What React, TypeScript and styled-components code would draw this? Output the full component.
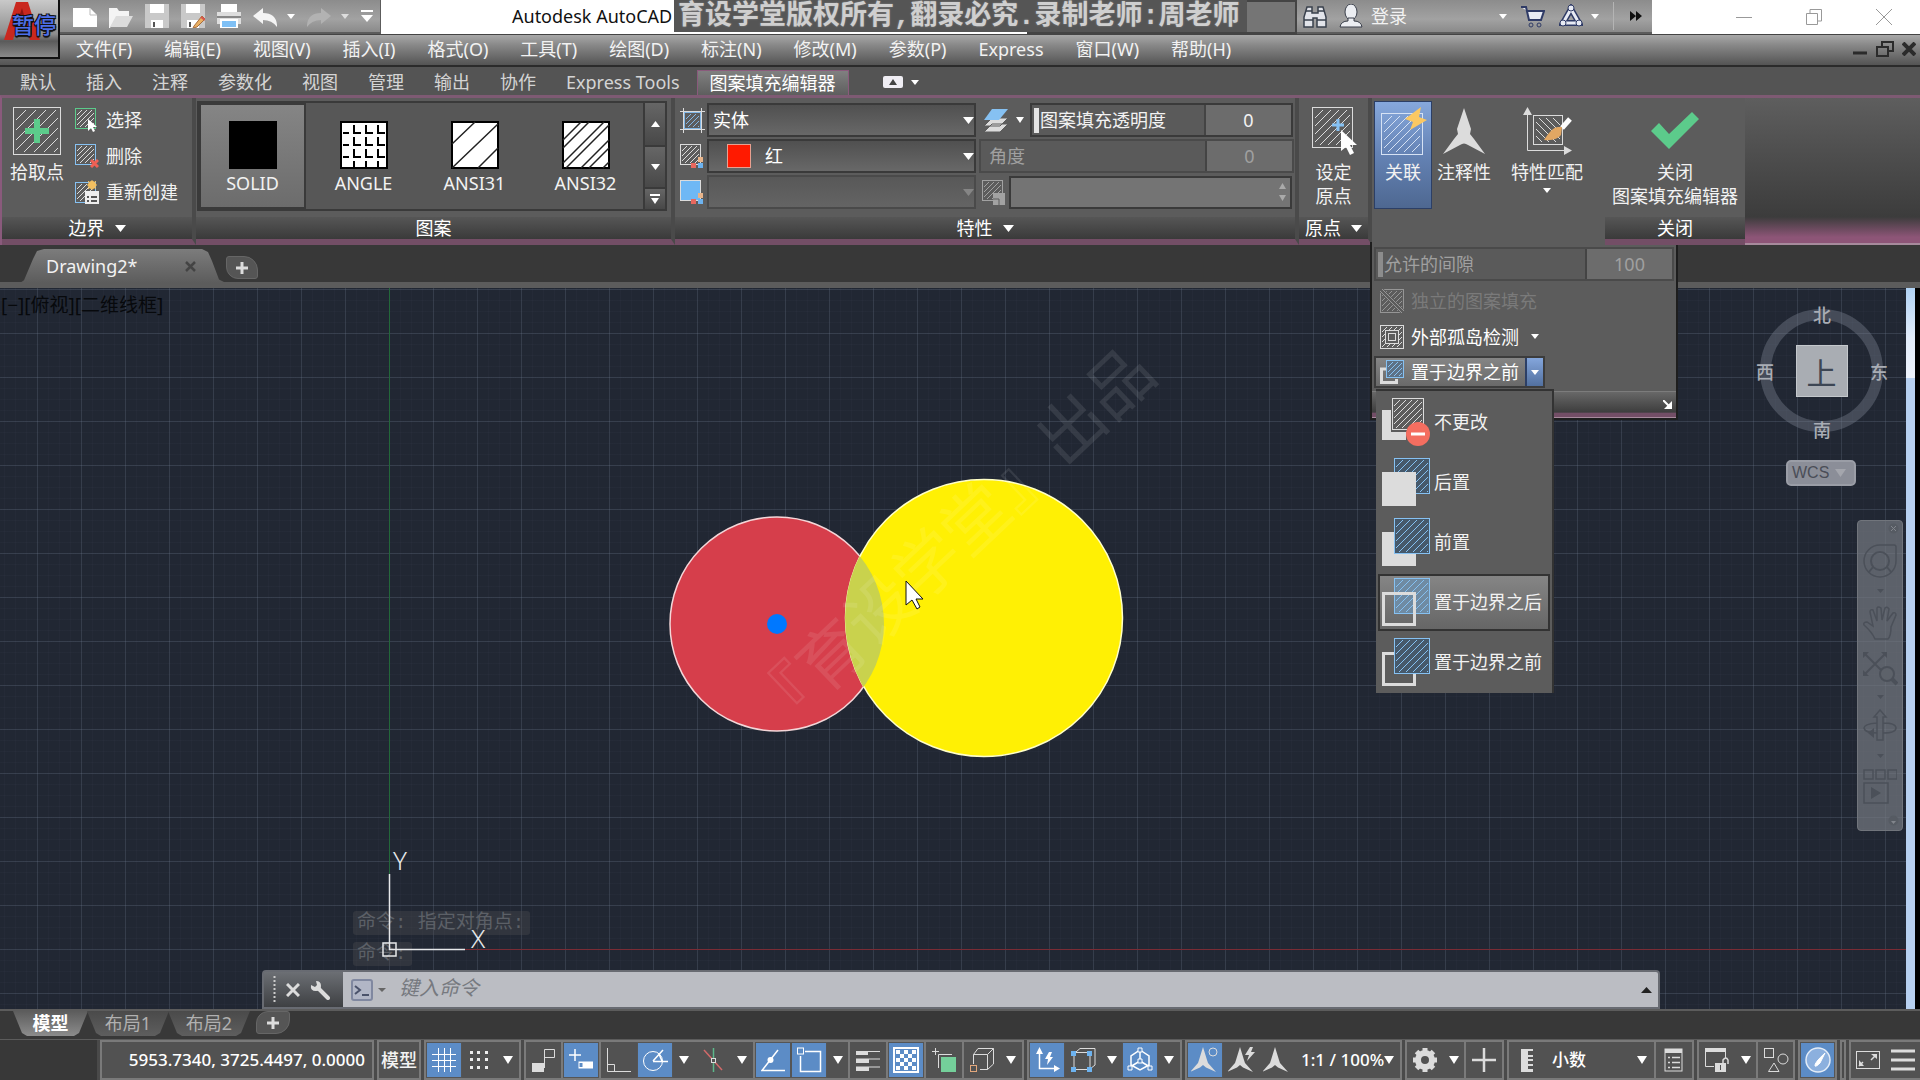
import React from 'react';
import styled, { createGlobalStyle, css } from 'styled-components';

const GlobalStyle = createGlobalStyle`
  *, *::before, *::after { box-sizing: border-box; }
  body { margin: 0; background: #383838; }
  body, button, input, select {
    font-family: "Noto Sans", "Noto Sans CJK SC", sans-serif;
    font-size: 18px;
    line-height: 24px;
    color: #f2f2f2;
  }
  button { background: none; border: 0; padding: 0; margin: 0; white-space: nowrap; }
  svg { display: block; flex: none; }
`;

const LIGHT = '#dcdcdc';
const BLUE = '#86c1f2';
const GREEN = '#5ccb8b';

/* ---------- icon drawing helpers ---------- */

const hatchPath = (x: number, y: number, w: number, h: number, step: number, back = false) => {
  let d = '';
  for (let c = step; c < w + h; c += step) {
    const x1 = Math.max(0, c - h);
    const y1 = Math.min(c, h);
    const x2 = Math.min(c, w);
    const y2 = Math.max(0, c - w);
    d += back
      ? `M${x + w - x1} ${y + y1}L${x + w - x2} ${y + y2}`
      : `M${x + x1} ${y + y1}L${x + x2} ${y + y2}`;
  }
  return d;
};

type HatchProps = {
  x: number; y: number; w: number; h: number;
  step?: number; color?: string; fill?: string; back?: boolean; pad?: number;
};

const Hatch = ({ x, y, w, h, step = 6, color = LIGHT, fill = 'none', back, pad = 2 }: HatchProps) => (
  <g stroke={color} fill="none">
    <rect x={x + 0.5} y={y + 0.5} width={w - 1} height={h - 1} fill={fill} />
    <path d={hatchPath(x + pad, y + pad, w - 2 * pad, h - 2 * pad, step, back)} />
  </g>
);

const Tri = ({ w = 10, h = 7, color = '#fff', up = false }: { w?: number; h?: number; color?: string; up?: boolean }) => (
  <svg width={w} height={h} viewBox="0 0 10 7" preserveAspectRatio="none">
    <path d={up ? 'M0 7H10L5 0Z' : 'M0 0H10L5 7Z'} fill={color} />
  </svg>
);

const Icon = ({ w = 24, h = w, children }: { w?: number; h?: number; children: React.ReactNode }) => (
  <svg width={w} height={h} viewBox={`0 0 ${w} ${h}`} fill="none" stroke={LIGHT}>{children}</svg>
);

/* ---------- title bar ---------- */

const Shell = styled.div`
  display: flex;
  flex-direction: column;
  min-height: 100vh;
  background: #383838;
  overflow: hidden;
`;

const Header = styled.header`
  position: relative;
`;

const TitleBar = styled.div`
  display: flex;
  height: 34px;
  padding-left: 59px;
  background: #fff;
`;

const QuickTools = styled.div`
  display: flex;
  align-items: center;
  gap: 12px;
  width: 322px;
  padding-left: 14px;
  background: linear-gradient(#8c8c8c, #a2a2a2 60%, #8a8a8a);
  border-bottom: 2px solid #5c5c5c;
  border-right: 1px solid #5c5c5c;
`;

const ToolButton = styled.button`
  display: flex;
  align-items: center;
  gap: 10px;
`;

const WindowTitle = styled.h1`
  flex: 1;
  margin: 0;
  padding-left: 131px;
  font-size: 18px;
  font-weight: 400;
  line-height: 33px;
  color: #111;
`;

const SearchBox = styled.input`
  width: 270px;
  background: #757575;
  border: 2px solid #444;
`;

const AccountTools = styled.div`
  display: flex;
  align-items: center;
  width: 355px;
  padding: 0 10px 0 6px;
  background: linear-gradient(#8c8c8c, #a2a2a2 60%, #8a8a8a);
  border-bottom: 2px solid #5c5c5c;
`;

const SignIn = styled.button`
  display: flex;
  align-items: center;
  gap: 8px;
  width: 173px;
  margin-left: 12px;
  svg:last-child { margin-left: auto; }
`;

const AccountButton = styled.button`
  display: flex;
  align-items: center;
  gap: 8px;
  margin-left: 14px;
`;

const Divider = styled.span`
  width: 1px;
  height: 28px;
  margin: 0 16px 0 14px;
  background: #b4b4b4;
`;

const WindowButtons = styled.div`
  display: flex;
  width: 268px;
  padding-left: 57px;
  button { width: 70px; display: grid; place-items: center; }
`;

const Notice = styled.div`
  position: absolute;
  top: 0;
  left: 674px;
  height: 32px;
  padding: 0 7px 0 4px;
  background: #555;
  font-family: "Liberation Mono", "Noto Sans CJK SC", monospace;
  font-size: 27px;
  font-weight: 700;
  line-height: 34px;
  color: #cfcfcf;
  text-shadow: 0 0 2px #888;
  white-space: nowrap;
`;

const AppButton = styled.button`
  position: absolute;
  top: 0;
  left: 0;
  width: 60px;
  height: 59px;
  background: linear-gradient(#c9c9c9, #8d8d8d 60%, #5a5a5a 72%, #8a8a8a);
  border: solid #111;
  border-width: 0 2px 2px 0;
  svg { position: absolute; top: 0; left: 4px; }
  span {
    position: absolute;
    top: 12px;
    left: 12px;
    font-size: 22px;
    font-weight: 500;
    color: #4d6fe8;
    text-shadow: 1px 1px 0 #111, -1px 1px 0 #111, 1px -1px 0 #111, -1px -1px 0 #111, 0 2px 1px #111;
  }
`;

/* ---------- menus and tabs ---------- */

const MenuBar = styled.nav`
  display: flex;
  align-items: center;
  gap: 32px;
  height: 33px;
  padding: 0 4px 2px 76px;
  background: linear-gradient(#a8a8a8, #878787 35%, #545454);
  border-top: 1px solid #444;
  border-bottom: 2px solid #2b2b2b;
`;

const DocButtons = styled.div`
  display: flex;
  align-items: center;
  gap: 8px;
  margin-left: auto;
`;

const TabStrip = styled.div`
  display: flex;
  align-items: flex-end;
  height: 28px;
  padding-left: 5px;
  background: #545454;
`;

const RibbonTab = styled.button<{ $active?: boolean }>`
  height: 25px;
  padding: 0 15px 1px;
  color: #d4d4d4;
  ${p => p.$active && css`
    margin: 0 2px;
    padding: 0 12px 1px;
    color: #fff;
    background: linear-gradient(#808080, #5e5e5e);
    border: 1px solid #8a5a7c;
    border-bottom: 0;
  `}
`;

const TabExtra = styled.button`
  display: flex;
  align-items: center;
  gap: 8px;
  height: 26px;
  margin-left: 32px;
`;

/* ---------- ribbon ---------- */

const Ribbon = styled.section`
  position: relative;
  z-index: 2;
  display: flex;
  height: 150px;
  border-top: 3px solid #7e5a73;
  border-left: 2px solid #8a5a7c;
  background: #5c5c5c;
`;

const Panel = styled.div<{ $w: number; $open?: boolean; $last?: boolean }>`
  position: relative;
  display: flex;
  flex-direction: column;
  width: ${p => p.$w}px;
  border-right: ${p => (p.$last ? 0 : 4)}px solid ${p => (p.$open ? '#5c5c5c' : '#4a4a4a')};
  background: #5c5c5c;
  border-bottom: ${p => (p.$open ? 0 : 6)}px solid #734e66;
`;

const PanelBody = styled.div<{ $pad?: string; $gap?: number }>`
  display: flex;
  align-items: flex-start;
  flex: 1;
  gap: ${p => p.$gap ?? 0}px;
  padding: ${p => p.$pad ?? '0'};
`;

const PanelTitle = styled.button`
  display: flex;
  align-items: center;
  justify-content: center;
  gap: 10px;
  height: 22px;
  background: linear-gradient(#565656, #3a3a3a);
  color: #fff;
`;

const RibbonRest = styled.div`
  flex: 1;
  background: linear-gradient(#5e5e5e, #3c3c3c 82%, #8d5577 96%);
  border-bottom: 2px solid #a78a9c;
`;

const BigButton = styled.button<{ $w: number; $active?: boolean }>`
  display: flex;
  flex-direction: column;
  align-items: center;
  width: ${p => p.$w}px;
  height: 106px;
  padding-top: 5px;
  ${p => p.$active && css`
    background: linear-gradient(#86a8dc, #6482b4 50%, #4e6891);
    outline: 1px solid #2c3f66;
  `}
  svg { margin-bottom: 5px; }
  svg + span ~ svg { margin: 4px 0 0; }
`;

const Stack = styled.div`
  display: flex;
  flex-direction: column;
`;

const SmallButton = styled.button`
  display: flex;
  align-items: center;
  gap: 7px;
  height: 36px;
`;

const Gallery = styled.div`
  display: flex;
  height: 110px;
  border: 2px solid #3a3a3a;
  background: #575757;
`;

const Swatch = styled.button<{ $active?: boolean }>`
  display: flex;
  flex-direction: column;
  align-items: center;
  gap: 2px;
  width: 107px;
  height: 106px;
  margin-right: 4px;
  padding-top: 16px;
  border: 2px solid ${p => (p.$active ? '#3a3a3a' : 'transparent')};
  background: ${p => (p.$active ? 'linear-gradient(#858585, #6c6c6c)' : 'none')};
`;

const GalleryScroll = styled.div`
  display: grid;
  grid-template-rows: 42px 42px 1fr;
  width: 22px;
  border-left: 2px solid #3a3a3a;
  button { display: grid; place-content: center; gap: 2px; background: linear-gradient(#666, #484848); }
  button + button { border-top: 2px solid #3a3a3a; }
`;

const Props = styled.div`
  display: grid;
  grid-template-columns: 25px 269px 1fr;
  grid-auto-rows: 34px;
  row-gap: 2px;
  column-gap: 3px;
  align-items: center;
  width: 100%;
`;

const Picker = styled.div`
  position: relative;
  display: flex;
  align-items: center;
  height: 34px;
  > svg { position: absolute; right: 2px; pointer-events: none; }
`;

const Select = styled.select<{ $indent?: number }>`
  width: 100%;
  height: 34px;
  padding: 0 20px 0 ${p => p.$indent ?? 4}px;
  appearance: none;
  color: #fff;
  border: 2px solid #3a3a3a;
  border-radius: 0;
  background: linear-gradient(#505050, #686868);
  opacity: 1;
  &:disabled { border-color: #4a4a4a; background: linear-gradient(#585858, #646464); }
`;

const ColorChip = styled.span`
  position: absolute;
  left: 20px;
  width: 24px;
  height: 24px;
  background: #ff1a00;
  border: 1px solid #e8a090;
`;

const PropRight = styled.div`
  display: flex;
  align-items: center;
`;

const SliderField = styled.div<{ $w: number; $off?: boolean }>`
  display: grid;
  flex: none;
  grid-template-columns: 1fr 87px;
  width: ${p => p.$w}px;
  height: 34px;
  border: 2px solid ${p => (p.$off ? '#4a4a4a' : '#3a3a3a')};
  background: #5a5a5a;
  color: ${p => (p.$off ? '#a0a0a0' : '#f2f2f2')};
  label, input[type='range'] { grid-area: 1 / 1; }
  label { z-index: 1; padding-left: 8px; line-height: 30px; pointer-events: none; }
`;

const Range = styled.input<{ $thumb: string }>`
  appearance: none;
  width: 100%;
  height: 30px;
  margin: 0;
  background: none;
  &::-webkit-slider-thumb {
    appearance: none;
    width: 5px;
    height: 25px;
    margin-left: 2px;
    background: ${p => p.$thumb};
  }
`;

const ValueInput = styled.input`
  width: 100%;
  min-width: 0;
  height: 30px;
  border: 0;
  border-left: 2px solid #444;
  border-radius: 0;
  padding: 0;
  background: #6c6c6c;
  text-align: center;
  color: inherit;
`;

const LayerButton = styled.button`
  display: flex;
  align-items: center;
  gap: 8px;
  width: 46px;
  margin-left: 5px;
`;

const SpinField = styled.div`
  display: flex;
  flex: 1;
  height: 33px;
  margin-right: 3px;
  border: 2px solid #3a3a3a;
  background: #747474;
  input { flex: 1; min-width: 0; border: 0; background: none; }
`;

const Spin = styled.span`
  display: flex;
  flex-direction: column;
  justify-content: space-around;
  padding: 2px 4px;
`;

/* ---------- expanded option panel ---------- */

const Expanded = styled.div`
  position: absolute;
  top: 144px;
  left: -2px;
  width: 308px;
  padding: 5px 2px 0;
  display: flex;
  flex-direction: column;
  align-items: flex-start;
  gap: 3px;
  background: #5c5c5c;
  border: solid #1e1e1e;
  border-width: 0 2px 2px;
`;

const OptionButton = styled.button<{ $off?: boolean }>`
  display: flex;
  align-items: center;
  height: 33px;
  padding-left: 6px;
  gap: 7px;
  color: ${p => (p.$off ? '#7a7a7a' : '#fff')};
  svg:nth-of-type(2) { margin-left: 5px; }
`;

const Split = styled.div`
  display: flex;
  height: 32px;
  border: 2px solid #3c3c3c;
  ${OptionButton} { height: 28px; width: 149px; padding-left: 4px; background: linear-gradient(#858585, #696969); }
`;

const SplitArrow = styled.button`
  display: grid;
  place-items: center;
  width: 18px;
  border-left: 2px solid #2c3f66;
  background: linear-gradient(#84a6dc, #52709f);
`;

const ExpandedFoot = styled.div`
  display: flex;
  align-items: center;
  align-self: stretch;
  justify-content: flex-end;
  height: 27px;
  margin: 0 -2px;
  padding-right: 4px;
  background: linear-gradient(#686868, #3e3e3e 80%, #734e66 86%);
  border-top: 1px solid #7c7c7c;
  border-bottom: 1px solid #a78a9c;
`;

const Popup = styled.div`
  position: absolute;
  top: 147px;
  left: 4px;
  width: 178px;
  display: flex;
  flex-direction: column;
  gap: 3px;
  padding: 3px 2px 2px 2px;
  background: #5c5c5c;
  border: solid #333;
  border-width: 2px 2px 0 0;
`;

const PopupItem = styled.button<{ $active?: boolean }>`
  display: flex;
  align-items: center;
  gap: 4px;
  height: 57px;
  padding: 0 0 2px 2px;
  border: 2px solid transparent;
  ${p => p.$active && css`
    border-color: #333;
    background: linear-gradient(#858585, #666);
  `}
`;

/* ---------- document area ---------- */

const FileTabs = styled.div`
  display: flex;
  align-items: flex-end;
  height: 43px;
  padding: 0 0 5px 20px;
  background: linear-gradient(#383838 37px, #5c5c5c 37px);
`;

const FileTab = styled.div`
  display: flex;
  align-items: center;
  justify-content: space-between;
  width: 206px;
  height: 34px;
  padding: 0 30px 0 26px;
  background: linear-gradient(#7c7c7c, #5c5c5c);
  clip-path: polygon(0 100%, 4px 92%, 13px 10px, 17px 2px, 24px 0, 182px 0, 188px 3px, 192px 12px, 199px 90%, 100% 100%);
`;

const AddTab = styled.button`
  display: grid;
  place-items: center;
  width: 32px;
  height: 23px;
  margin-bottom: 4px;
  background: #555;
  border: 1px solid #666;
  border-radius: 3px 14px 3px 12px;
`;

const Workspace = styled.main`
  display: flex;
  flex: 1;
  background: #000;
`;

const Canvas = styled.div`
  position: relative;
  flex: 1;
  overflow: hidden;
  background-color: #212733;
  background-image:
    linear-gradient(90deg, rgba(120, 135, 155, 0.2) 1px, transparent 1px),
    linear-gradient(rgba(120, 135, 155, 0.22) 1px, transparent 1px),
    linear-gradient(90deg, rgba(120, 135, 155, 0.04) 1px, transparent 1px),
    linear-gradient(rgba(120, 135, 155, 0.04) 1px, transparent 1px);
  background-size: 44px 44px, 44px 44px, 11px 11px, 11px 11px;
  background-position: 37px 0, 0 1px, 37px 0, 0 1px;
`;

const Edge = styled.div`
  width: 9px;
  margin-right: 5px;
  background: linear-gradient(#b0d2f4, #e2ecfa 50px, #eef3fc 90px, #b7d0f0 90px);
`;

const Scene = styled.svg`
  position: absolute;
  inset: 0;
  width: 100%;
  height: 100%;
`;

const ViewLabel = styled.div`
  position: absolute;
  top: 5px;
  left: 1px;
  font-size: 19px;
  color: #07090c;
`;

const ViewCube = styled.div`
  position: absolute;
  top: 21px;
  right: 23px;
  width: 123px;
  height: 123px;
  display: grid;
  place-items: center;
  border: 11px solid rgba(120, 126, 140, 0.42);
  border-radius: 50%;
`;

const CubeFace = styled.button`
  width: 52px;
  height: 52px;
  background: #a9adb3;
  border: 1px solid #c4c8cc;
  color: #3d4654;
  font-family: "Noto Sans CJK SC", sans-serif;
  font-size: 30px;
  line-height: 46px;
`;

const Compass = styled.span<{ $x: number; $y: number }>`
  position: absolute;
  left: ${p => p.$x}px;
  top: ${p => p.$y}px;
  font-weight: 500;
  color: #a9adb5;
`;

const WcsButton = styled.button`
  position: absolute;
  top: 172px;
  right: 50px;
  display: flex;
  align-items: center;
  justify-content: space-between;
  width: 70px;
  height: 26px;
  padding: 0 8px 1px 4px;
  background: #8b8e98;
  border: 2px solid #9a9da6;
  border-radius: 5px;
  font-family: "Liberation Sans", sans-serif;
  font-size: 16px;
  color: #4a4d57;
`;

const NavBar = styled.div`
  position: absolute;
  top: 232px;
  right: 3px;
  display: flex;
  flex-direction: column;
  width: 46px;
  background: rgba(118, 122, 130, 0.7);
  border: 1px solid #71757c;
  border-radius: 4px;
`;

const NavButton = styled.button<{ $h: number; $end?: boolean }>`
  display: grid;
  place-items: center;
  justify-items: ${p => (p.$end ? 'end' : 'center')};
  padding-right: ${p => (p.$end ? 3 : 0)}px;
  height: ${p => p.$h}px;
`;

const History = styled.div`
  position: absolute;
  left: 353px;
  bottom: 43px;
  display: flex;
  flex-direction: column;
  align-items: flex-start;
  gap: 7px;
  span {
    padding: 0 6px 0 4px;
    background: rgba(80, 80, 84, 0.35);
    border-radius: 3px;
    font-family: "Liberation Mono", "Noto Sans CJK SC", monospace;
    font-size: 19px;
    line-height: 24px;
    color: #5c6067;
    white-space: pre;
  }
`;

const CommandBar = styled.div`
  position: absolute;
  left: 262px;
  right: 246px;
  bottom: 0;
  display: flex;
  height: 39px;
  border: 2px solid #686b72;
  border-radius: 4px 4px 0 0;
  background: #bbbdc3;
`;

const CommandGrip = styled.div`
  display: flex;
  align-items: center;
  gap: 14px;
  width: 79px;
  padding-left: 9px;
  background: linear-gradient(#6c6f74, #3e4043);
  svg:first-child { margin-right: -4px; }
`;

const CommandInput = styled.input`
  flex: 1;
  border: 0;
  background: none;
  padding: 0 0 4px 13px;
  font-size: 20px;
  font-style: italic;
  color: #333;
  &::placeholder { color: #76797f; opacity: 1; }
`;

const PromptButton = styled.button`
  display: flex;
  align-items: center;
  gap: 5px;
  padding-left: 8px;
`;

const HistoryToggle = styled.button`
  padding: 0 6px 0 0;
`;

/* ---------- bottom bars ---------- */

const LayoutTabs = styled.div`
  display: flex;
  height: 30px;
  padding-left: 13px;
  background: #383838;
  border-top: 2px solid #5c5c5c;
`;

const LayoutTab = styled.button<{ $active?: boolean }>`
  width: ${p => (p.$active ? 75 : 82)}px;
  height: 25px;
  padding-bottom: 2px;
  margin-right: -1px;
  color: ${p => (p.$active ? '#fff' : '#b0b0b0')};
  font-weight: ${p => (p.$active ? 700 : 400)};
  background: ${p => (p.$active ? 'linear-gradient(#5c5c5c, #8c8c8c)' : 'linear-gradient(#4a4a4a, #5e5e5e)')};
  clip-path: polygon(0 0, 100% 0, calc(100% - 9px) 88%, calc(100% - 14px) 100%, 14px 100%, 9px 88%);
`;

const LayoutAdd = styled.button`
  display: grid;
  place-items: center;
  width: 34px;
  height: 23px;
  margin-left: 7px;
  background: #555;
  border: 1px solid #666;
  border-radius: 12px 3px 14px 3px;
`;

const StatusBar = styled.footer`
  display: flex;
  align-items: stretch;
  justify-content: flex-end;
  gap: 3px;
  height: 41px;
  border-top: 1px solid #5c5c5c;
  background: #4a4a4a;
`;

const StatusLead = styled.div`
  flex: 1;
  background: #383838;
`;

const Group = styled.div<{ $w?: number; $open?: boolean }>`
  display: flex;
  width: ${p => (p.$w ? `${p.$w}px` : 'auto')};
  border: 2px solid #7a7a7a;
  ${p => p.$open && 'border-right: 0;'}
`;

const Cell = styled.button<{ $w: number; $on?: boolean; $sep?: boolean }>`
  display: grid;
  place-items: center;
  width: ${p => p.$w}px;
  border-right: ${p => (p.$sep ? '2px solid #7a7a7a' : '0')};
  background: ${p => (p.$on ? '#5c8cc6' : '#525252')};
  background-clip: padding-box;
  box-shadow: ${p => (p.$on ? 'inset 0 0 0 1px #555' : 'none')};
  font-weight: 500;
  svg { margin: auto; }
`;

const StatusText = styled.button<{ $w: number; $sep?: boolean; $end?: boolean }>`
  display: flex;
  align-items: center;
  justify-content: ${p => (p.$end ? 'flex-end' : 'space-between')};
  width: ${p => p.$w}px;
  padding: 0 7px;
  border-right: ${p => (p.$sep ? '2px solid #7a7a7a' : '0')};
  background: #525252;
  color: #fff;
  font-size: 17px;
  font-weight: 500;
`;

/* ---------- status icons ---------- */

const Person = ({ extra }: { extra?: React.ReactNode }) => (
  <Icon w={28} h={28}>
    <path d="M12 1L16 14L17 17L25 26L15 21.500L12 19L9 21.500L-1 26L7 17L8 14Z" fill={LIGHT} stroke="none" />
    {extra}
  </Icon>
);

const icons = {
  grid: <Icon><path d="M6.500 0V24M12.500 0V24M18.500 0V24M0 6.500H24M0 12.500H24M0 18.500H24" stroke="#fff" /></Icon>,
  dots: (
    <Icon w={20}>
      {[1, 8, 16].map(x => [1, 8, 16].map(y => <rect key={`${x}-${y}`} x={x} y={y} width="3" height="3" fill="#eee" stroke="none" />))}
    </Icon>
  ),
  snap: <Icon><path d="M12.500 20V1.500H22.500V9.500H13" /><rect x="0" y="15" width="12" height="9" fill={LIGHT} stroke="none" /></Icon>,
  dyn: <Icon><path d="M6 1V13M0 7H12" stroke="#fff" strokeWidth="1.500" /><rect x="10" y="14" width="14" height="6" fill="#fff" stroke="#fff" /><rect x="10.500" y="15" width="3" height="4" fill="#5c8cc6" stroke="none" /></Icon>,
  ortho: <Icon><path d="M.5 0V23.500H24M.5 16.500H7.500V23" /></Icon>,
  polar: <Icon w={26}><circle cx="11" cy="14" r="9.500" stroke="#fff" /><path d="M11 14.500H26M11 14L21 3M17 7L20 14" stroke="#fff" strokeWidth="1.500" /></Icon>,
  iso: <Icon><path d="M3 2L21 22" stroke="#d26a6a" strokeWidth="1.500" /><path d="M12.500 0V24" stroke="#5cb88b" strokeWidth="1.500" /><rect x="10.500" y="10.500" width="4" height="4" fill="#525252" /></Icon>,
  track: <Icon><path d="M17 2L1 22.500H24" stroke="#fff" strokeWidth="1.500" /><circle cx="9.500" cy="12" r="3" fill="#fff" stroke="none" /></Icon>,
  osnap: <Icon w={26}><path d="M9 4.500H24.500V24.500H4.500V9" stroke="#fff" strokeWidth="1.500" /><rect x="1.500" y="1" width="6" height="6" stroke="#fff" /></Icon>,
  lwt: <Icon><path d="M0 3.500H24M0 11H24M0 19H24" /><path d="M0 5H12M0 13H13M0 21H13" strokeWidth="4" /></Icon>,
  checker: (
    <Icon w={26}>
      <rect x="1" y="1" width="24" height="24" stroke="#fff" strokeWidth="2" fill="#5c8cc6" />
      {[0, 1, 2, 3, 4].map(r => [0, 1, 2, 3, 4].map(c => ((r + c) % 2 ? null : <rect key={`${r}-${c}`} x={3 + c * 4} y={3 + r * 4} width="4" height="4" fill="#fff" stroke="none" />)))}
    </Icon>
  ),
  cycle: <Icon><path d="M3.500 0V7M0 3.500H7M6.500 20V6.500H20" /><rect x="9" y="9" width="15" height="15" fill="#74cf9a" stroke="none" /></Icon>,
  box: <Icon w={26}><path d="M4.500 17V7.500H18.500V22.500H11M4.500 7.500L9 1.500H24.500V17L18.500 22.500M18.500 7.500L24.500 1.500" /><rect x="1.500" y="18.500" width="6" height="6" stroke="#e2a77c" /></Icon>,
  ducs: <Icon w={26}><path d="M5.500 3V21.500H23" stroke="#fff" strokeWidth="1.500" /><path d="M5.500 0L9 7H2ZM26 21.500L20 25V18ZM15 5L11 12H14L13 18L19 10H16L18 5Z" fill="#fff" stroke="none" /></Icon>,
  filter: <Icon w={26}><path d="M4 5.500H20V22.500H4ZM6 5L10 1.500H25V18L20 22" /><path d="M1 4H6V9H1ZM17 4H22V9H17ZM1 20H6V25H1ZM17 20H22V25H17Z" fill="#6db3f0" stroke="none" /></Icon>,
  gizmo: <Icon w={26}><path d="M13 3L22 9V18L13 23L4 18V9ZM13 2V14L3 20M13 14L23 20" stroke="#fff" strokeWidth="1.500" /><path d="M11 1H15V5H11ZM1 19H5V23H1ZM21 19H25V23H21ZM11 12H15V16H11Z" fill="#5c8cc6" stroke="#fff" /></Icon>,
  gear: (
    <Icon w={26}>
      <circle cx="13" cy="13" r="7" strokeWidth="6" />
      {[0, 45, 90, 135].map(a => <path key={a} d="M13 1V6M13 20V25" strokeWidth="5" transform={`rotate(${a} 13 13)`} />)}
    </Icon>
  ),
  plus: <Icon><path d="M12 0V24M0 12H24" strokeWidth="2.500" /></Icon>,
  ruler: <Icon w={14} h={24}><path d="M1 1H13V3H8V7H13V9H8V11H13V13H8V16H13V18H8V21H13V24H1Z" fill={LIGHT} stroke="none" /></Icon>,
  props: <Icon w={20} h={24}><rect x="1" y="1" width="17" height="22" /><path d="M1 3H18" strokeWidth="4" /><path d="M4 9.500H6M8 9.500H16M4 14.500H6M8 14.500H16M4 19.500H6M8 19.500H16" strokeWidth="1.500" /></Icon>,
  lock: <Icon w={26}><path d="M1.500 1V19.500H10M21.500 1V11" /><path d="M1 3H22" strokeWidth="4" /><rect x="11" y="16" width="11" height="9" fill={LIGHT} stroke="none" /><path d="M19 16V13Q22 9 24 13V17" strokeWidth="1.500" /><path d="M16.500 18V23" stroke="#525252" /></Icon>,
  isolate: <Icon w={26}><rect x="1.500" y="1.500" width="9" height="9" /><circle cx="20" cy="12" r="5" /><path d="M11 16L16 24.500H5.500Z" /></Icon>,
  clean: <Icon w={28}><circle cx="14" cy="14" r="12" fill="#8cb0de" stroke="#e4edf8" strokeWidth="1.500" /><path d="M21 7L16 17Q12 21 11 20Q10 17 21 7" fill="#fff" stroke="#fff" /></Icon>,
  full: <Icon w={26}><rect x="1.500" y="4.500" width="23" height="17" /><path d="M16 13L20 9M4 19L8 15" strokeWidth="1.500" /><path d="M16 7H22V12ZM4 13V19H9Z" fill={LIGHT} stroke="none" /></Icon>,
  menu: <Icon w={26}><path d="M1 4H25M1 13H25M1 22H25" strokeWidth="3" /></Icon>,
};

const Bolt = <path d="M22 1L17 9H21L19 15L27 6H23L25 1Z" fill={LIGHT} stroke="none" />;

/* ---------- small reusable pieces ---------- */

const Drop = ({ w, sep, label }: { w: number; sep?: boolean; label: string }) => (
  <Cell $w={w} $sep={sep} aria-label={label}><Tri w={10} h={8} /></Cell>
);

const menus = ['文件(F)', '编辑(E)', '视图(V)', '插入(I)', '格式(O)', '工具(T)', '绘图(D)', '标注(N)', '修改(M)', '参数(P)', 'Express', '窗口(W)', '帮助(H)'];
const tabs = ['默认', '插入', '注释', '参数化', '视图', '管理', '输出', '协作', 'Express Tools'];

const swatches: { name: string; art: React.ReactNode }[] = [
  { name: 'SOLID', art: <rect width="48" height="48" fill="#000" stroke="none" /> },
  {
    name: 'ANGLE',
    art: (
      <>
        <rect x="1" y="1" width="46" height="46" fill="#fff" stroke="#000" strokeWidth="2" />
        <path d="M3 12H9M14 4V12H21M26 4V12H33M38 4V12H45M3 24H9M14 16V24H21M26 16V24H33M38 16V24H45M3 36H9M14 28V36H21M26 28V36H33M38 28V36H45M14 40V46M26 40V46M38 40V46" stroke="#000" strokeWidth="2" />
      </>
    ),
  },
  {
    name: 'ANSI31',
    art: (
      <>
        <rect x="1" y="1" width="46" height="46" fill="#fff" stroke="#000" strokeWidth="2" />
        <path d="M1 23L24 1M1 47L47 3M27 47L47 27" stroke="#222" strokeWidth="1.500" />
      </>
    ),
  },
  {
    name: 'ANSI32',
    art: (
      <>
        <rect x="1" y="1" width="46" height="46" fill="#fff" stroke="#000" strokeWidth="2" />
        <path d="M1 19L19 1M1 27L27 1M1 42L42 1M4 47L47 4M19 47L47 19M27 47L47 27M41 47L47 41" stroke="#222" strokeWidth="1.500" />
      </>
    ),
  },
];

const paletteDots = (
  <g stroke="none">
    <rect x="19" y="14" width="5" height="5" fill="#e8b48a" />
    <rect x="12" y="20" width="5" height="5" fill="#e8685e" />
    <rect x="19" y="20" width="5" height="5" fill="#6db3f0" />
  </g>
);

const order = [
  {
    label: '不更改',
    art: (
      <>
        <path d="M0 12H9V34H24V42H0Z" fill={LIGHT} stroke="none" />
        <Hatch x={10} y={0} w={32} h={32} />
        <circle cx="36" cy="36" r="12" fill="#f46e60" stroke="none" />
        <path d="M29 36H43" stroke="#fff" strokeWidth="3" />
      </>
    ),
  },
  { label: '后置', art: <><Hatch x={12} y={0} w={36} h={36} step={7} color={BLUE} fill="#46596b" /><rect x="0" y="14" width="34" height="34" fill={LIGHT} stroke="none" /></> },
  { label: '前置', art: <><rect x="0" y="14" width="34" height="34" fill={LIGHT} stroke="none" /><Hatch x={12} y={0} w={36} h={36} step={7} color={BLUE} fill="#46596b" /></> },
  { label: '置于边界之后', art: <><Hatch x={12} y={0} w={36} h={36} step={7} color={BLUE} fill="#6f8ba3" /><rect x="1.500" y="15.500" width="31" height="31" strokeWidth="3" /></> },
  { label: '置于边界之前', art: <><rect x="1.500" y="15.500" width="31" height="31" strokeWidth="3" /><Hatch x={12} y={0} w={36} h={36} step={7} color={BLUE} fill="#46596b" /></> },
];

const floppy = (
  <>
    <path d="M0 0H24V24H0Z" fill="#c9c9c9" stroke="none" />
    <path d="M5 0H19V9H5ZM6 16H18V24H6Z" fill="#fff" stroke="none" />
    <path d="M9 18V23" stroke="#555" strokeWidth="2" />
  </>
);

const navStroke = '#4b5059';

export default function App() {
  return (
    <Shell>
      <GlobalStyle />
      <Header>
        <TitleBar>
          <QuickTools>
            <ToolButton aria-label="新建"><Icon><path d="M0 4H17L24 11V23H0Z" fill="#fff" stroke="none" /><path d="M17 4V11H24" stroke="#bbb" /></Icon></ToolButton>
            <ToolButton aria-label="打开"><Icon><path d="M0 24V4H8L10 7H20V12H8L1 24Z" fill="#f4f4f4" stroke="none" /><path d="M7 12H24L18 23H1Z" fill="#dcdcdc" stroke="none" /></Icon></ToolButton>
            <ToolButton aria-label="保存"><Icon>{floppy}</Icon></ToolButton>
            <ToolButton aria-label="另存为"><Icon>{floppy}<path d="M13 22L21 12L24 15L16 23L12 24Z" fill="#eab062" stroke="#a86d3d" /><path d="M20 13L24 16" stroke="#d9544e" strokeWidth="2" /></Icon></ToolButton>
            <ToolButton aria-label="打印"><Icon><path d="M4 0H20V9H4Z" fill="#fff" stroke="none" /><path d="M0 8H24V20H0Z" fill="#dedede" stroke="none" /><path d="M0 13H24" stroke="#888" strokeWidth="2" /><path d="M4 16H20V24H4Z" fill="#7fc0f5" stroke="#fff" strokeWidth="2" /></Icon></ToolButton>
            <ToolButton aria-label="放弃"><Icon><path d="M0 12L10 4V9Q23 9 24 21V23Q19 16 10 16V20Z" fill="#f4f4f4" stroke="none" /></Icon><Tri w={8} h={5} /></ToolButton>
            <ToolButton aria-label="重做"><Icon><path d="M24 12L14 4V9Q1 9 0 21V23Q5 16 14 16V20Z" fill="#b2b2b2" stroke="none" /></Icon><Tri w={8} h={5} color="#ddd" /></ToolButton>
            <ToolButton aria-label="自定义"><Icon w={12} h={12}><path d="M0 1H12" stroke="#fff" strokeWidth="2" /><path d="M0 5H12L6 12Z" fill="#fff" stroke="none" /></Icon></ToolButton>
          </QuickTools>
          <WindowTitle>Autodesk AutoCAD</WindowTitle>
          <SearchBox aria-label="搜索" />
          <AccountTools>
            <ToolButton aria-label="搜索"><Icon><path d="M1 23V13L4 3H9V9H15V3H20L23 13V23H14V14H10V23Z" fill="#e2e4ea" stroke="#39404c" strokeWidth="1.500" /><path d="M1 16H10M14 16H23M3 7H9M15 7H21" stroke="#39404c" strokeWidth="1.500" /></Icon></ToolButton>
            <SignIn><Icon><ellipse cx="12" cy="8" rx="6" ry="8" fill="#eceef2" stroke="#3a3f4a" /><path d="M1 23Q2 17 9 17V14H15V17Q22 17 23 23Z" fill="#eceef2" stroke="#3a3f4a" /></Icon>登录<Tri w={8} h={5} /></SignIn>
            <AccountButton aria-label="购物车"><Icon><path d="M0 3H5L8 16H20L23 7H6" fill="#e8ebf4" stroke="#2f3b66" strokeWidth="2" /><circle cx="10" cy="21" r="2" stroke="#2f3b66" /><circle cx="18" cy="21" r="2" stroke="#2f3b66" /></Icon></AccountButton>
            <AccountButton aria-label="应用"><Icon><path d="M12 5L4 19H20Z" stroke="#2f3b66" strokeWidth="6" /><path d="M12 5L4 19H20Z" stroke="#e8ebf4" strokeWidth="3" /><circle cx="12" cy="4" r="3" fill="#e8ebf4" stroke="#2f3b66" /><circle cx="4" cy="19" r="3" fill="#e8ebf4" stroke="#2f3b66" /><circle cx="20" cy="19" r="3" fill="#e8ebf4" stroke="#2f3b66" /></Icon><Tri w={8} h={5} /></AccountButton>
            <Divider />
            <ToolButton aria-label="更多"><Icon w={12} h={10}><path d="M0 0L6 5L0 10ZM6 0L12 5L6 10Z" fill="#111" stroke="none" /></Icon></ToolButton>
          </AccountTools>
          <WindowButtons>
            <button aria-label="最小化"><Icon w={16}><path d="M0 8.500H16" stroke="#999" /></Icon></button>
            <button aria-label="还原"><Icon w={16}><path d="M.5 4.500H11.500V15.500H.5ZM4 4V.5H15.500V12H12" stroke="#999" /></Icon></button>
            <button aria-label="关闭窗口"><Icon w={16}><path d="M0 0L16 16M16 0L0 16" stroke="#999" /></Icon></button>
          </WindowButtons>
        </TitleBar>
        <MenuBar>
          {menus.map(m => <button key={m}>{m}</button>)}
          <DocButtons>
            <button aria-label="最小化图形"><Icon w={16}><path d="M1 12H15" stroke="#2b2b2b" strokeWidth="3" /></Icon></button>
            <button aria-label="还原图形"><Icon w={18}><path d="M1 7H12V16H1ZM6 6V2H17V11H13" stroke="#2b2b2b" strokeWidth="2" /></Icon></button>
            <button aria-label="关闭图形"><Icon w={14}><path d="M1 1L13 13M13 1L1 13" stroke="#2b2b2b" strokeWidth="4" /></Icon></button>
          </DocButtons>
        </MenuBar>
        <Notice>育设学堂版权所有,翻录必究.录制老师:周老师</Notice>
        <AppButton>
          <svg width="50" height="42" viewBox="0 0 50 42"><path d="M0 40L12 2H24L36 40H26L22 29H12L9 40Z" fill="#c9281f" /><path d="M18 8L23 26H12Z" fill="#8d1512" /></svg>
          <span>暂停</span>
        </AppButton>
      </Header>

      <TabStrip>
        {tabs.map(t => <RibbonTab key={t}>{t}</RibbonTab>)}
        <RibbonTab $active>图案填充编辑器</RibbonTab>
        <TabExtra aria-label="最小化功能区">
          <Icon w={20} h={12}><rect width="20" height="12" rx="2" fill="#f0eef4" stroke="none" /><path d="M6 9L10 3L14 9Z" fill="#444" stroke="none" /></Icon>
          <Tri w={8} h={5} />
        </TabExtra>
      </TabStrip>

      <Ribbon>
        <Panel $w={194}>
          <PanelBody $gap={7} $pad="4px 0 0 4px">
            <BigButton $w={62}>
              <Icon w={48}><Hatch x={0} y={0} w={48} h={48} step={10} pad={3} /><path d="M24 12V36M12 24H36" stroke={GREEN} strokeWidth="6" /></Icon>
              <span>拾取点</span>
            </BigButton>
            <Stack>
              <SmallButton><Icon><Hatch x={0} y={0} w={21} h={21} step={5} color={LIGHT} /><rect x=".5" y=".5" width="20" height="20" stroke={GREEN} /><path d="M13 11V23L16 20L18 24L20 23L18 19H22Z" fill="#fff" stroke="none" /></Icon>选择</SmallButton>
              <SmallButton><Icon><Hatch x={0} y={0} w={21} h={21} step={5} /><rect x=".5" y=".5" width="20" height="20" stroke={BLUE} /><path d="M16 16L23 23M23 16L16 23" stroke="#ee6055" strokeWidth="3" /></Icon>删除</SmallButton>
              <SmallButton><Icon><Hatch x={0} y={2} w={21} h={21} step={5} /><rect x=".5" y="2.500" width="20" height="20" stroke={BLUE} /><circle cx="17" cy="5" r="4" fill="#f4c060" stroke="none" /><path d="M17 0V10M12 5H22M13 1L21 9M21 1L13 9" stroke="#f4c060" /><rect x="10" y="11" width="14" height="13" fill="#eee" stroke="none" /><path d="M12 17H14M16 17H22M12 21H14M16 21H22" stroke="#555" strokeWidth="2" /></Icon>重新创建</SmallButton>
            </Stack>
          </PanelBody>
          <PanelTitle>边界<Tri w={11} /></PanelTitle>
        </Panel>

        <Panel $w={479}>
          <PanelBody $pad="3px 0 0 1px">
            <Gallery>
              {swatches.map((s, i) => (
                <Swatch key={s.name} $active={i === 0}>
                  <Icon w={48}>{s.art}</Icon>
                  {s.name}
                </Swatch>
              ))}
              <GalleryScroll>
                <button aria-label="上一行"><Tri w={9} h={6} up /></button>
                <button aria-label="下一行"><Tri w={9} h={6} /></button>
                <button aria-label="展开图案"><Icon w={10} h={10}><path d="M0 1H10" stroke="#fff" strokeWidth="2" /><path d="M1 4H9L5 10Z" fill="#fff" stroke="none" /></Icon></button>
              </GalleryScroll>
            </Gallery>
          </PanelBody>
          <PanelTitle>图案</PanelTitle>
        </Panel>

        <Panel $w={624}>
          <PanelBody $pad="5px 0 0 4px">
            <Props>
              <Icon w={27}><Hatch x={5} y={5} w={17} h={17} step={5} color="#82b6e4" fill="none" /><path d="M4.500 1V26M22.500 1V26M1 4.500H26M1 22.500H26" /></Icon>
              <Picker><Select aria-label="图案类型"><option>实体</option></Select><Tri w={11} /></Picker>
              <PropRight>
                <LayerButton aria-label="图案填充图层">
                  <Icon><path d="M8 16L0 24H16L24 16ZM8 10L0 18H16L24 10Z" fill={LIGHT} stroke="#5c5c5c" /><path d="M8 1L0 12H15L24 1Z" fill={BLUE} stroke="none" /></Icon>
                  <Tri w={8} h={6} />
                </LayerButton>
                <SliderField $w={263}>
                  <label htmlFor="transparency">图案填充透明度</label>
                  <Range id="transparency" type="range" defaultValue={0} $thumb="#e4e4e4" />
                  <ValueInput aria-label="透明度值" defaultValue="0" />
                </SliderField>
              </PropRight>

              <Icon w={27}><Hatch x={1} y={1} w={21} h={21} step={5} />{paletteDots}</Icon>
              <Picker><Select aria-label="图案填充颜色" $indent={56}><option>红</option></Select><ColorChip /><Tri w={11} /></Picker>
              <SliderField $w={315} $off>
                <label htmlFor="angle">角度</label>
                <Range id="angle" type="range" defaultValue={0} $thumb="transparent" disabled />
                <ValueInput aria-label="角度值" defaultValue="0" disabled />
              </SliderField>

              <Icon w={27}><rect x="1.500" y="1.500" width="20" height="20" fill="#6fb8f5" />{paletteDots}</Icon>
              <Picker><Select aria-label="背景色" disabled><option /></Select><Tri w={11} color="#858585" /></Picker>
              <PropRight>
                <Icon w={30} h={27}><g opacity=".55"><Hatch x={3} y={1} w={21} h={21} step={5} /><path d="M14 14H26V26H14Z" fill={LIGHT} stroke="none" /><path d="M20 26V20H14" stroke="#5c5c5c" /></g></Icon>
                <SpinField>
                  <input aria-label="图案填充比例" />
                  <Spin><Tri w={7} h={6} color="#aaa" up /><Tri w={7} h={6} color="#aaa" /></Spin>
                </SpinField>
              </PropRight>
            </Props>
          </PanelBody>
          <PanelTitle>特性<Tri w={11} /></PanelTitle>
        </Panel>

        <Panel $w={73}>
          <PanelBody $pad="4px 0 0 0">
            <BigButton $w={72}>
              <Icon w={48}><Hatch x={2} y={0} w={41} h={41} step={8} pad={3} /><path d="M28 12V24M22 18H34" stroke={BLUE} strokeWidth="3" /><path d="M31 23V44L36 40L40 48L44 46L40 38H47Z" fill="#fff" stroke="none" /></Icon>
              <span>设定</span>
              <span>原点</span>
            </BigButton>
          </PanelBody>
          <PanelTitle>原点<Tri w={11} /></PanelTitle>
        </Panel>

        <Panel $w={233} $open>
          <PanelBody $pad="4px 0 0 3px">
            <BigButton $w={56} $active>
              <Icon w={48}><Hatch x={2} y={6} w={42} h={42} step={8} pad={3} color="#d6e2f4" /><path d="M42 0L26 12L34 15L31 23L48 13L40 10Z" fill="#fbc862" stroke="none" /></Icon>
              <span>关联</span>
            </BigButton>
            <BigButton $w={66}>
              <Icon w={48}><path d="M24 1L31 22L30 27L34 32L45 47L28 38Q24 35 20 38L3 47L14 32L18 27L17 22Z" fill={LIGHT} stroke="none" /></Icon>
              <span>注释性</span>
            </BigButton>
            <BigButton $w={100}>
              <Icon w={50} h={48}><path d="M5.500 6V43.500H43" /><path d="M5.500 0L10 8H1ZM50 43.500L42 48V39Z" fill={LIGHT} stroke="none" /><Hatch x={11} y={8} w={30} h={30} step={7} pad={3} back /><path d="M48 12L40 21" stroke="#fff" strokeWidth="5" /><path d="M40 20L39 28Q35 34 22 33Q30 20 36 20Z" fill="#e2a763" stroke="none" /></Icon>
              <span>特性匹配</span>
              <Tri w={8} h={5} />
            </BigButton>
          </PanelBody>
          <Expanded>
            <SliderField $w={300} $off>
              <label htmlFor="gap">允许的间隙</label>
              <Range id="gap" type="range" defaultValue={0} $thumb="#8c8c8c" disabled />
              <ValueInput aria-label="间隙值" defaultValue="100" disabled />
            </SliderField>
            <OptionButton $off disabled><Icon><g opacity=".45"><Hatch x={0} y={0} w={24} h={24} step={5} /><path d="M0 0L24 24" stroke="#5c5c5c" strokeWidth="5" /><path d="M2 0L24 22M0 2L22 24" /></g></Icon>独立的图案填充</OptionButton>
            <OptionButton><Icon><Hatch x={0} y={0} w={24} h={24} step={5} /><rect x="5.500" y="5.500" width="13" height="13" fill="#5c5c5c" /><rect x="8.500" y="8.500" width="7" height="7" /></Icon>外部孤岛检测<Tri w={8} h={5} /></OptionButton>
            <Split>
              <OptionButton><Icon><path d="M6 9H1.500V22.500H16.500V19" strokeWidth="3" /><Hatch x={6} y={0} w={18} h={18} step={5} color={BLUE} fill="#5d7186" /></Icon>置于边界之前</OptionButton>
              <SplitArrow aria-label="选择绘图次序"><Tri w={8} h={5} /></SplitArrow>
            </Split>
            <ExpandedFoot>
              <button aria-label="图案填充设置"><Icon w={9}><path d="M0 0L6 6" stroke="#fff" strokeWidth="2" /><path d="M9 1V9H1Z" fill="#fff" stroke="none" /></Icon></button>
            </ExpandedFoot>
            <Popup>
              {order.map((o, i) => (
                <PopupItem key={o.label} $active={i === 3}><Icon w={48}>{o.art}</Icon>{o.label}</PopupItem>
              ))}
            </Popup>
          </Expanded>
        </Panel>

        <Panel $w={140} $last>
          <PanelBody $pad="4px 0 0 0">
            <BigButton $w={140}>
              <Icon w={48}><path d="M0 24L8 16L18 27L41 5L48 12L18 42Z" fill={GREEN} stroke="none" /></Icon>
              <span>关闭</span>
              <span>图案填充编辑器</span>
            </BigButton>
          </PanelBody>
          <PanelTitle>关闭</PanelTitle>
        </Panel>
        <RibbonRest />
      </Ribbon>

      <FileTabs>
        <FileTab><span>Drawing2*</span><button aria-label="关闭 Drawing2"><Icon w={11}><path d="M1 1L10 10M10 1L1 10" stroke="#444" strokeWidth="2.500" /></Icon></button></FileTab>
        <AddTab aria-label="新图形"><Icon w={12}><path d="M6 0V12M0 6H12" strokeWidth="3" /></Icon></AddTab>
      </FileTabs>

      <Workspace>
        <Canvas>
          <ViewLabel>[−][俯视][二维线框]</ViewLabel>
          <History><span>命令: 指定对角点:</span><span>命令:</span></History>
          <Scene>
            <path d="M389.500 0V586" stroke="#23683a" />
            <path d="M465 661.500H4000" stroke="#7a2c35" />
            <circle cx="777" cy="336" r="107" fill="#d63e4b" stroke="#f4d6d8" strokeWidth="1.500" />
            <circle cx="984" cy="330" r="138.500" fill="#fff004" stroke="#ffffc8" strokeWidth="1.500" />
            <clipPath id="lens"><circle cx="984" cy="330" r="139" /></clipPath>
            <circle cx="777" cy="336" r="107" fill="#c9d24d" clipPath="url(#lens)" />
            <circle cx="777" cy="336" r="10" fill="#0078ff" />
            <text transform="translate(948 250) rotate(-43.500)" textAnchor="middle" dominantBaseline="central" fontFamily="Noto Sans CJK SC" fontSize="66" fill="#fff" opacity=".09">『育设学堂』出品</text>
            <g stroke="#e6e8ea" fill="none" strokeWidth="1.500">
              <path d="M389.500 586V661.500H465" />
              <rect x="383" y="655" width="13" height="13" />
            </g>
            <g fill="#e6e8ea" fontFamily="Noto Sans" fontWeight="300" fontSize="26" textAnchor="middle">
              <text x="400" y="582">Y</text>
              <text x="478" y="660">X</text>
            </g>
            <path d="M906 293V317L912 312L917 321L920 319L916 311H923Z" fill="#fff" stroke="#111" />
          </Scene>
          <ViewCube>
            <CubeFace>上</CubeFace>
            <Compass $x={42} $y={-17}>北</Compass>
            <Compass $x={42} $y={98}>南</Compass>
            <Compass $x={-15} $y={40}>西</Compass>
            <Compass $x={99} $y={40}>东</Compass>
          </ViewCube>
          <WcsButton>WCS<Tri w={11} h={8} color="#a4a6ad" /></WcsButton>
          <NavBar>
            <NavButton $h={15} $end aria-label="关闭导航栏"><Icon w={11}><circle cx="5.500" cy="5.500" r="5" fill="#565b63" stroke="none" /><path d="M3 3L8 8M8 3L3 8" stroke="#81858c" /></Icon></NavButton>
            <NavButton $h={50} aria-label="导航控制盘"><Icon w={34}><path d="M17 1H31Q33 1 33 3V17A16 16 0 1 1 17 1Z" stroke={navStroke} strokeWidth="1.500" /><circle cx="17" cy="17" r="9" stroke={navStroke} strokeWidth="2" /><path d="M10 23L6 28M24 23L28 28" stroke={navStroke} strokeWidth="2" /></Icon></NavButton>
            <NavButton $h={10} aria-label="控制盘选项"><Tri w={7} h={4} color={navStroke} /></NavButton>
            <NavButton $h={54} aria-label="平移"><Icon w={34}><path d="M12 33Q9 26 1 19Q0 16 4 16L10 20L7 6Q7 3 10 4L14 15L14 2Q15 0 18 2L19 14L22 2Q24 0 26 3L24 15L30 7Q33 6 33 9L28 21Q28 30 25 33Z" stroke={navStroke} strokeWidth="1.500" /></Icon></NavButton>
            <NavButton $h={38} aria-label="范围缩放"><Icon w={36}><path d="M2 2L24 24M24 2L2 24" stroke={navStroke} strokeWidth="2" /><path d="M1 7V1H7ZM19 1H25V7ZM1 19V25H7Z" fill={navStroke} stroke="none" /><circle cx="25" cy="23" r="7" stroke={navStroke} strokeWidth="2" fill="#5d626a" /><path d="M30 28L35 33" stroke={navStroke} strokeWidth="4" /></Icon></NavButton>
            <NavButton $h={17} aria-label="缩放选项"><Tri w={7} h={4} color={navStroke} /></NavButton>
            <NavButton $h={42} aria-label="动态观察"><Icon w={34}><path d="M14 31V8H11L17 1L23 8H20V31ZM14 14Q1 15 1 19Q2 24 14 24M20 24Q33 24 33 19Q33 14 20 14" stroke={navStroke} strokeWidth="1.500" /><path d="M5 24L11 19V29Z" fill={navStroke} stroke="none" /></Icon></NavButton>
            <NavButton $h={17} aria-label="动态观察选项"><Tri w={7} h={4} color={navStroke} /></NavButton>
            <NavButton $h={46} aria-label="ShowMotion"><Icon w={34} h={36}><path d="M1 1H10V10H1ZM13 1H22V10H13ZM25 1H34V10H25ZM1 14H25V34H1Z" stroke={navStroke} strokeWidth="1.500" /><path d="M8 18L18 24L8 30Z" fill={navStroke} stroke="none" /></Icon></NavButton>
            <NavButton $h={20} $end aria-label="自定义导航栏"><Icon w={11}><circle cx="5.500" cy="5.500" r="5" fill="#565b63" stroke="none" /><path d="M3 6H8L5.500 9Z" fill="#81858c" stroke="none" /></Icon></NavButton>
          </NavBar>
          <CommandBar>
            <CommandGrip>
              <Icon w={3} h={28}><path d="M1.500 0V28" stroke="#ccc" strokeWidth="2" strokeDasharray="2 2" /></Icon>
              <button aria-label="关闭命令行"><Icon w={14}><path d="M1 1L13 13M13 1L1 13" strokeWidth="3" /></Icon></button>
              <button aria-label="自定义命令行"><Icon w={20}><path d="M8 8L18 18" strokeWidth="4" strokeLinecap="round" /><path d="M6 1L7 5L5 7L1 5Q0 11 6 11Q11 11 11 6Q11 1 6 1" fill={LIGHT} stroke="none" /></Icon></button>
            </CommandGrip>
            <PromptButton aria-label="最近使用的命令"><Icon w={22}><rect x="1" y="1" width="20" height="20" rx="2" fill="#b1b6c6" stroke="#8088a0" strokeWidth="2" /><path d="M4 7L9 11L4 15M11 16H18" stroke="#4a526a" strokeWidth="2" /></Icon><Tri w={8} h={4} color="#666" /></PromptButton>
            <CommandInput aria-label="命令" placeholder="键入命令" />
            <HistoryToggle aria-label="命令历史"><Tri w={11} h={6} color="#222" up /></HistoryToggle>
          </CommandBar>
        </Canvas>
        <Edge />
      </Workspace>

      <LayoutTabs>
        <LayoutTab $active>模型</LayoutTab>
        <LayoutTab>布局1</LayoutTab>
        <LayoutTab>布局2</LayoutTab>
        <LayoutAdd aria-label="新建布局"><Icon w={12}><path d="M6 0V12M0 6H12" strokeWidth="3" /></Icon></LayoutAdd>
      </LayoutTabs>

      <StatusBar>
        <StatusLead />
        <Group><StatusText $w={270} $end>5953.7340, 3725.4497, 0.0000</StatusText></Group>
        <Group><Cell $w={40}>模型</Cell></Group>
        <Group>
          <Cell $w={36} $on aria-label="栅格">{icons.grid}</Cell>
          <Cell $w={34} aria-label="捕捉">{icons.dots}</Cell>
          <Drop w={23} label="捕捉选项" />
        </Group>
        <Group>
          <Cell $w={37} $sep aria-label="推断约束">{icons.snap}</Cell>
          <Cell $w={38} $on $sep aria-label="动态输入">{icons.dyn}</Cell>
          <Cell $w={36} aria-label="正交">{icons.ortho}</Cell>
          <Cell $w={36} $on aria-label="极轴追踪">{icons.polar}</Cell>
          <Drop w={22} label="极轴选项" />
          <Cell $w={36} aria-label="等轴测草图">{icons.iso}</Cell>
          <Drop w={24} sep label="等轴测选项" />
          <Cell $w={36} $on aria-label="对象捕捉追踪">{icons.track}</Cell>
          <Cell $w={36} $on aria-label="对象捕捉">{icons.osnap}</Cell>
          <Drop w={23} sep label="对象捕捉选项" />
          <Cell $w={38} $sep aria-label="线宽">{icons.lwt}</Cell>
          <Cell $w={38} $on $sep aria-label="透明度">{icons.checker}</Cell>
          <Cell $w={38} $sep aria-label="选择循环">{icons.cycle}</Cell>
          <Cell $w={36} aria-label="三维对象捕捉">{icons.box}</Cell>
          <Drop w={22} label="三维对象捕捉选项" />
        </Group>
        <Group>
          <Cell $w={36} $on aria-label="动态 UCS">{icons.ducs}</Cell>
          <Cell $w={36} aria-label="选择过滤">{icons.filter}</Cell>
          <Drop w={21} label="过滤选项" />
          <Cell $w={36} $on aria-label="小控件">{icons.gizmo}</Cell>
          <Drop w={22} label="小控件选项" />
        </Group>
        <Group>
          <Cell $w={36} $on aria-label="注释可见性"><Person extra={<circle cx="22" cy="6" r="4" />} /></Cell>
          <Cell $w={37} aria-label="自动缩放"><Person extra={Bolt} /></Cell>
          <Cell $w={34} aria-label="注释比例"><Person /></Cell>
          <StatusText $w={106}>1:1 / 100%<Tri w={10} h={8} /></StatusText>
        </Group>
        <Group>
          <Cell $w={36} aria-label="切换工作空间">{icons.gear}</Cell>
          <Drop w={23} sep label="工作空间选项" />
          <Cell $w={36} aria-label="注释监视器">{icons.plus}</Cell>
        </Group>
        <Group>
          <Cell $w={36} aria-label="单位">{icons.ruler}</Cell>
          <StatusText $w={111} $sep>小数<Tri w={10} h={8} /></StatusText>
          <Cell $w={36} aria-label="快捷特性">{icons.props}</Cell>
        </Group>
        <Group>
          <Cell $w={36} aria-label="锁定用户界面">{icons.lock}</Cell>
          <Drop w={23} sep label="锁定选项" />
          <Cell $w={35} aria-label="隔离对象">{icons.isolate}</Cell>
        </Group>
        <Group><Cell $w={35} $on aria-label="硬件加速">{icons.clean}</Cell></Group>
        <Group $w={6} />
        <Group $open>
          <Cell $w={34} aria-label="全屏显示">{icons.full}</Cell>
          <Cell $w={35} aria-label="自定义">{icons.menu}</Cell>
        </Group>
      </StatusBar>
    </Shell>
  );
}
